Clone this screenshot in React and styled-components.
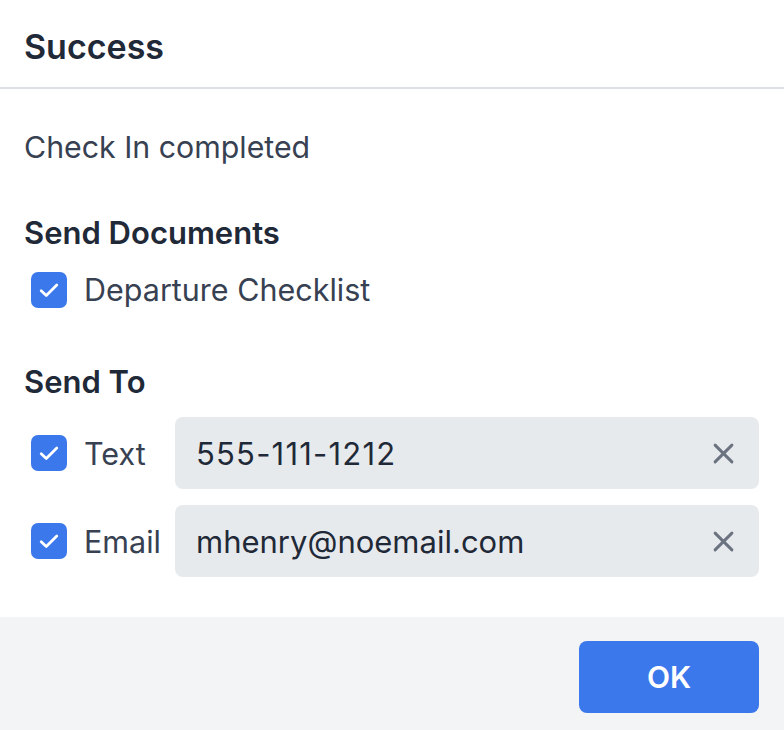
import React from "react";
import styled, { createGlobalStyle } from "styled-components";

const Global = createGlobalStyle`
  html, body { margin: 0; padding: 0; background: #ffffff; }
  body { font-family: Inter, "Noto Sans", "Liberation Sans", sans-serif; -webkit-font-smoothing: antialiased; }
  * { box-sizing: border-box; }
`;

const Dialog = styled.div`
  width: 784px;
  height: 730px;
  display: flex;
  flex-direction: column;
  background: #ffffff;
`;

const Header = styled.div`
  height: 89px;
  padding: 5px 24px 0;
  display: flex;
  align-items: center;
  border-bottom: 2px solid #dcdfe3;
`;

const Title = styled.h1`
  margin: 0;
  font-size: 34px;
  font-weight: 600;
  color: #1f2937;
`;

const Body = styled.div`
  flex: 1;
  padding: 38px 25px 0 24px;
  display: flex;
  flex-direction: column;
`;

const Message = styled.p`
  margin: 0;
  font-size: 30.3px;
  line-height: 40px;
  color: #374151;
`;

const SectionTitle = styled.h2`
  margin: ${(p) => p.$top}px 0 0;
  font-size: 31px;
  line-height: 40px;
  font-weight: 600;
  color: #1f2937;
`;

const CheckRow = styled.label`
  display: flex;
  align-items: center;
  gap: 17px;
  padding-left: 7px;
  margin-top: 18px;
  font-size: 30.5px;
  color: #374151;
`;

const Box = styled.span`
  width: 36px;
  height: 36px;
  border-radius: 7px;
  background: #3b78eb;
  display: inline-flex;
  align-items: center;
  justify-content: center;
  flex-shrink: 0;
`;

const Grid = styled.div`
  display: grid;
  grid-template-columns: 136px 1fr;
  column-gap: 15px;
  row-gap: 16px;
  margin-top: 15px;
  align-items: center;
`;

const FieldLabel = styled(CheckRow)`
  margin-top: 0;
  white-space: nowrap;
`;

const Field = styled.div`
  height: 72px;
  border-radius: 8px;
  background: #e7eaed;
  display: flex;
  align-items: center;
  padding: 0 25px 0 21px;
`;

const Value = styled.span`
  flex: 1;
  font-size: 31px;
  color: #1f2937;
  letter-spacing: ${(p) => p.$spacing || 0}px;
`;

const Clear = styled.button`
  border: 0;
  background: transparent;
  padding: 0;
  display: inline-flex;
  color: #6b7280;
  cursor: pointer;
`;

const Footer = styled.div`
  height: 113px;
  background: #f3f4f6;
  display: flex;
  justify-content: flex-end;
  align-items: flex-start;
  padding: 24px 25px 0 0;
`;

const Button = styled.button`
  width: 180px;
  height: 72px;
  border: 0;
  border-radius: 8px;
  background: #3b78eb;
  color: #ffffff;
  font-family: inherit;
  font-size: 30px;
  font-weight: 600;
  cursor: pointer;
`;

const Check = () => (
  <Box>
    <svg width="26" height="26" viewBox="0 0 20 20" fill="none">
      <path d="M4 10.6l3.9 3.7L16 6.2" stroke="#fff" strokeWidth="2.1" strokeLinecap="round" strokeLinejoin="round" />
    </svg>
  </Box>
);

const XIcon = () => (
  <svg width="21" height="21" viewBox="0 0 20 20" fill="none">
    <path d="M2 2l16 16M18 2L2 18" stroke="currentColor" strokeWidth="2.8" strokeLinecap="round" />
  </svg>
);

export default function App() {
  return (
    <>
      <Global />
      <Dialog>
        <Header>
          <Title>Success</Title>
        </Header>
        <Body>
          <Message>Check In completed</Message>
          <SectionTitle $top={46}>Send Documents</SectionTitle>
          <CheckRow>
            <Check />
            Departure Checklist
          </CheckRow>
          <SectionTitle $top={54}>Send To</SectionTitle>
          <Grid>
            <FieldLabel>
              <Check />
              Text
            </FieldLabel>
            <Field>
              <Value $spacing={1.2}>555-111-1212</Value>
              <Clear aria-label="Clear"><XIcon /></Clear>
            </Field>
            <FieldLabel>
              <Check />
              Email
            </FieldLabel>
            <Field>
              <Value>mhenry@noemail.com</Value>
              <Clear aria-label="Clear"><XIcon /></Clear>
            </Field>
          </Grid>
        </Body>
        <Footer>
          <Button>OK</Button>
        </Footer>
      </Dialog>
    </>
  );
}
